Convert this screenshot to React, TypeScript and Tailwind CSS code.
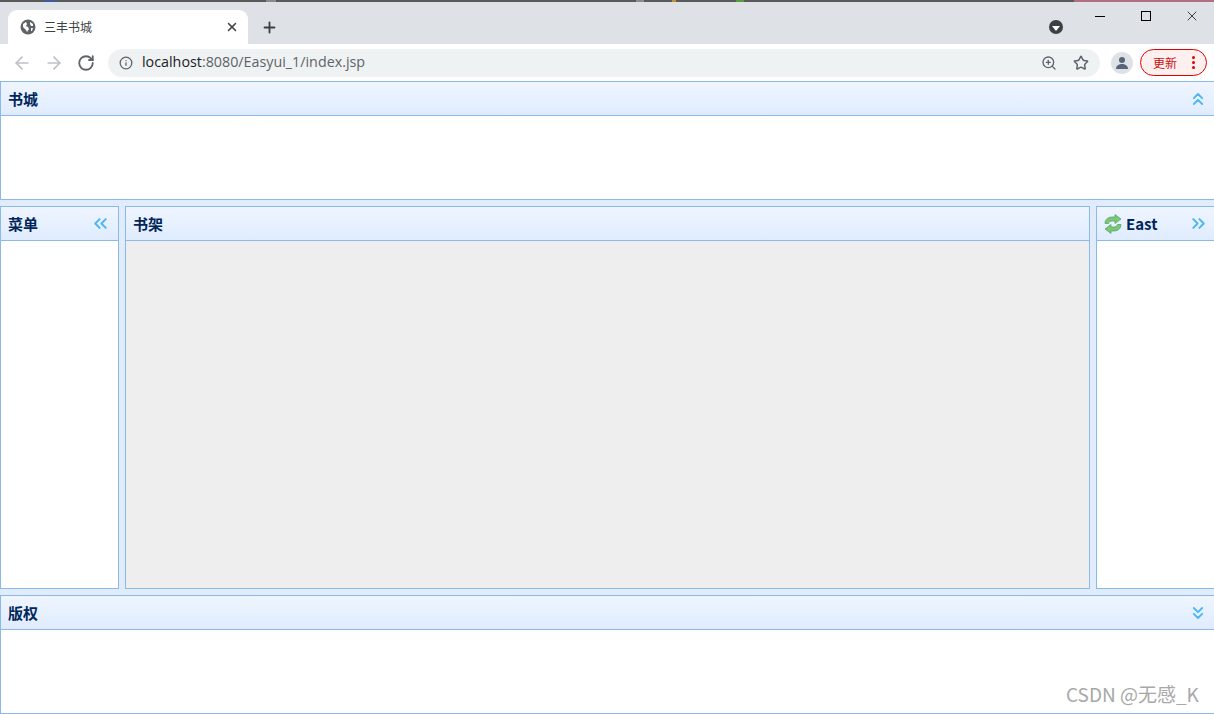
import React from "react";
import { ArrowLeft, ArrowRight, RotateCw, Info, ZoomIn, Star, Plus, X, ChevronsUp, ChevronsDown, ChevronsLeft, ChevronsRight } from "lucide-react";

const CJK = "font-['Noto_Sans_CJK_SC','Open_Sans',sans-serif]";

function Header({ title, right, iconLeft }: { title: string; right: React.ReactNode; iconLeft?: React.ReactNode }) {
  return (
    <div className="flex h-[34px] shrink-0 items-center justify-between border-b border-[#8ab9ea] bg-gradient-to-b from-[#eff5ff] to-[#dfecfe] pl-[7px] pr-[7px]">
      <div className="flex items-center gap-[3px]">
        {iconLeft}
        <span className={`text-[15px] font-bold leading-none text-[#00265a] ${CJK}`}>{title}</span>
      </div>
      {right}
    </div>
  );
}

function Globe() {
  return (
    <svg width="16" height="16" viewBox="0 0 16 16">
      <circle cx="8" cy="8" r="7.500" fill="#5f6368" />
      <path d="M3 5l3-2 1 2-1 2 2 1 1 2-2 3-1-2-1-1-2-2zM10 3l3 2 0 2-2 0-1-2zM11 9l2 0-1 3-1 0z" fill="#fff" />
    </svg>
  );
}

function Refresh() {
  return (
    <svg width="20" height="20" viewBox="0 0 20 20" className="-ml-[1px]">
      <path d="M2 9.500c0-4 3-6.500 7-6.500h3V.5l6 4.500-6 4.500V7H9c-2 0-3 1-3.500 2.500z" fill="#7cc67a" stroke="#4fa05a" strokeWidth="0.7" />
      <path d="M18 10.500c0 4-3 6.500-7 6.500H8v2.500l-6-4.500 6-4.500V13h3c2 0 3-1 3.500-2.500z" fill="#7cc67a" stroke="#4fa05a" strokeWidth="0.7" />
    </svg>
  );
}

export default function App() {
  return (
    <div className="relative flex h-[714px] w-[1214px] flex-col overflow-hidden bg-[#e0ecfb] font-['Liberation_Sans',sans-serif]">
      {/* tab strip */}
      <div className="relative h-[44px] shrink-0 bg-[#dee1e6]">
        <div className="flex h-[2px] bg-[#5a5a5a]">
          <div className="ml-[44px] h-[2px] w-[12px] bg-[#3f5a94]" />
          <div className="ml-[210px] h-[2px] w-[10px] bg-[#8a8a8a]" />
          <div className="ml-[360px] h-[2px] w-[8px] bg-[#8a8a8a]" />
          <div className="ml-[28px] h-[2px] w-[4px] bg-[#c09030]" />
          <div className="ml-[60px] h-[2px] w-[8px] bg-[#5a9a40]" />
          <div className="ml-[330px] h-[2px] flex-1 bg-[#b07080]" />
        </div>
        <div className="absolute bottom-0 left-[8px] flex h-[34px] w-[240px] items-center rounded-t-[9px] bg-white pl-[12px] pr-[9px]">
          <Globe />
          <span className={`ml-[8px] flex-1 text-[12px] leading-none text-[#3c4043] ${CJK}`}>三丰书城</span>
          <X size={14} strokeWidth={2.6} className="text-[#3c4043]" />
        </div>
        <Plus size={17} strokeWidth={2.6} className="absolute left-[261px] top-[19px] text-[#3c4043]" />
        <div className="absolute left-[1049px] top-[20px] flex h-[14px] w-[14px] items-center justify-center rounded-full bg-[#3c4043]">
          <div className="mt-[2px] h-0 w-0 border-x-[4px] border-t-[5px] border-x-transparent border-t-white" />
        </div>
        <div className="absolute left-[1095px] top-[16px] h-px w-[10px] bg-black" />
        <div className="absolute left-[1141px] top-[11px] h-[10px] w-[10px] border border-black" />
        <X size={16} strokeWidth={1.1} className="absolute left-[1184px] top-[8px] text-black" />
      </div>

      {/* toolbar */}
      <div className="flex h-[37px] shrink-0 items-center bg-white pl-[12px]">
        <ArrowLeft size={20} strokeWidth={2} className="text-[#bdc1c6]" />
        <ArrowRight size={20} strokeWidth={2} className="ml-[12px] text-[#bdc1c6]" />
        <RotateCw size={18} strokeWidth={2.4} className="ml-[13px] text-[#5f6368]" />
        <div className="ml-[13px] flex h-[28px] w-[992px] items-center rounded-full bg-[#eff2f3] pl-[11px] pr-[11px]">
          <Info size={14} strokeWidth={2.2} className="text-[#5f6368]" />
          <span className="ml-[9px] flex-1 font-['Open_Sans',sans-serif] text-[14.3px] leading-none text-[#5f6368]">
            <span className="text-[#202124]">localhost</span>:8080/Easyui_1/index.jsp
          </span>
          <ZoomIn size={16} strokeWidth={2} className="text-[#5f6368]" />
          <Star size={16} strokeWidth={2.2} className="ml-[16px] text-[#5f6368]" />
        </div>
        <div className="ml-[11px] flex h-[22px] w-[22px] items-center justify-center rounded-full bg-[#dee1e6]">
          <svg width="14" height="14" viewBox="0 0 14 14">
            <circle cx="7" cy="4" r="3" fill="#566479" />
            <path d="M1 13c0-3.500 3-5 6-5s6 1.500 6 5z" fill="#566479" />
          </svg>
        </div>
        <div className="ml-[7px] flex h-[27px] w-[67px] items-center rounded-full border border-[#e00000] bg-[#fff0f0] pl-[12px]">
          <span className={`flex-1 text-[12px] leading-none text-[#c81010] ${CJK}`}>更新</span>
          <div className="mr-[11px] flex flex-col gap-[2px]">
            <div className="h-[3px] w-[3px] rounded-full bg-[#e00000]" />
            <div className="h-[3px] w-[3px] rounded-full bg-[#e00000]" />
            <div className="h-[3px] w-[3px] rounded-full bg-[#e00000]" />
          </div>
        </div>
      </div>

      {/* north */}
      <section className="flex h-[119px] w-[1215px] shrink-0 flex-col border border-[#8ab9ea] bg-white">
        <Header title="书城" right={<ChevronsUp size={20} strokeWidth={2.2} className="-mr-[1px] text-[#4db5f2]" />} />
      </section>

      {/* middle */}
      <div className="mt-[6px] flex h-[383px] shrink-0 gap-[6px]">
        <section className="flex w-[119px] shrink-0 flex-col border border-[#8ab9ea] bg-white">
          <Header title="菜单" right={<ChevronsLeft size={21} strokeWidth={2.2} className="text-[#4db5f2]" />} />
        </section>
        <section className="flex w-[965px] shrink-0 flex-col border border-[#8ab9ea] bg-[#eeeeee]">
          <Header title="书架" right={null} />
        </section>
        <section className="flex w-[120px] shrink-0 flex-col border border-[#8ab9ea] bg-white">
          <Header
            title="East"
            iconLeft={<Refresh />}
            right={<ChevronsRight size={21} strokeWidth={2.2} className="-mr-[1px] text-[#4db5f2]" />}
          />
        </section>
      </div>

      {/* south */}
      <section className="mt-[6px] flex h-[119px] w-[1215px] shrink-0 flex-col border border-[#8ab9ea] bg-white">
        <Header title="版权" right={<ChevronsDown size={20} strokeWidth={2.2} className="-mr-[1px] text-[#4db5f2]" />} />
      </section>

      <span className={`absolute left-[1066px] top-[682px] text-[19px] leading-[24px] text-[#a8a8a8] ${CJK}`}>CSDN @无感_K</span>
    </div>
  );
}
